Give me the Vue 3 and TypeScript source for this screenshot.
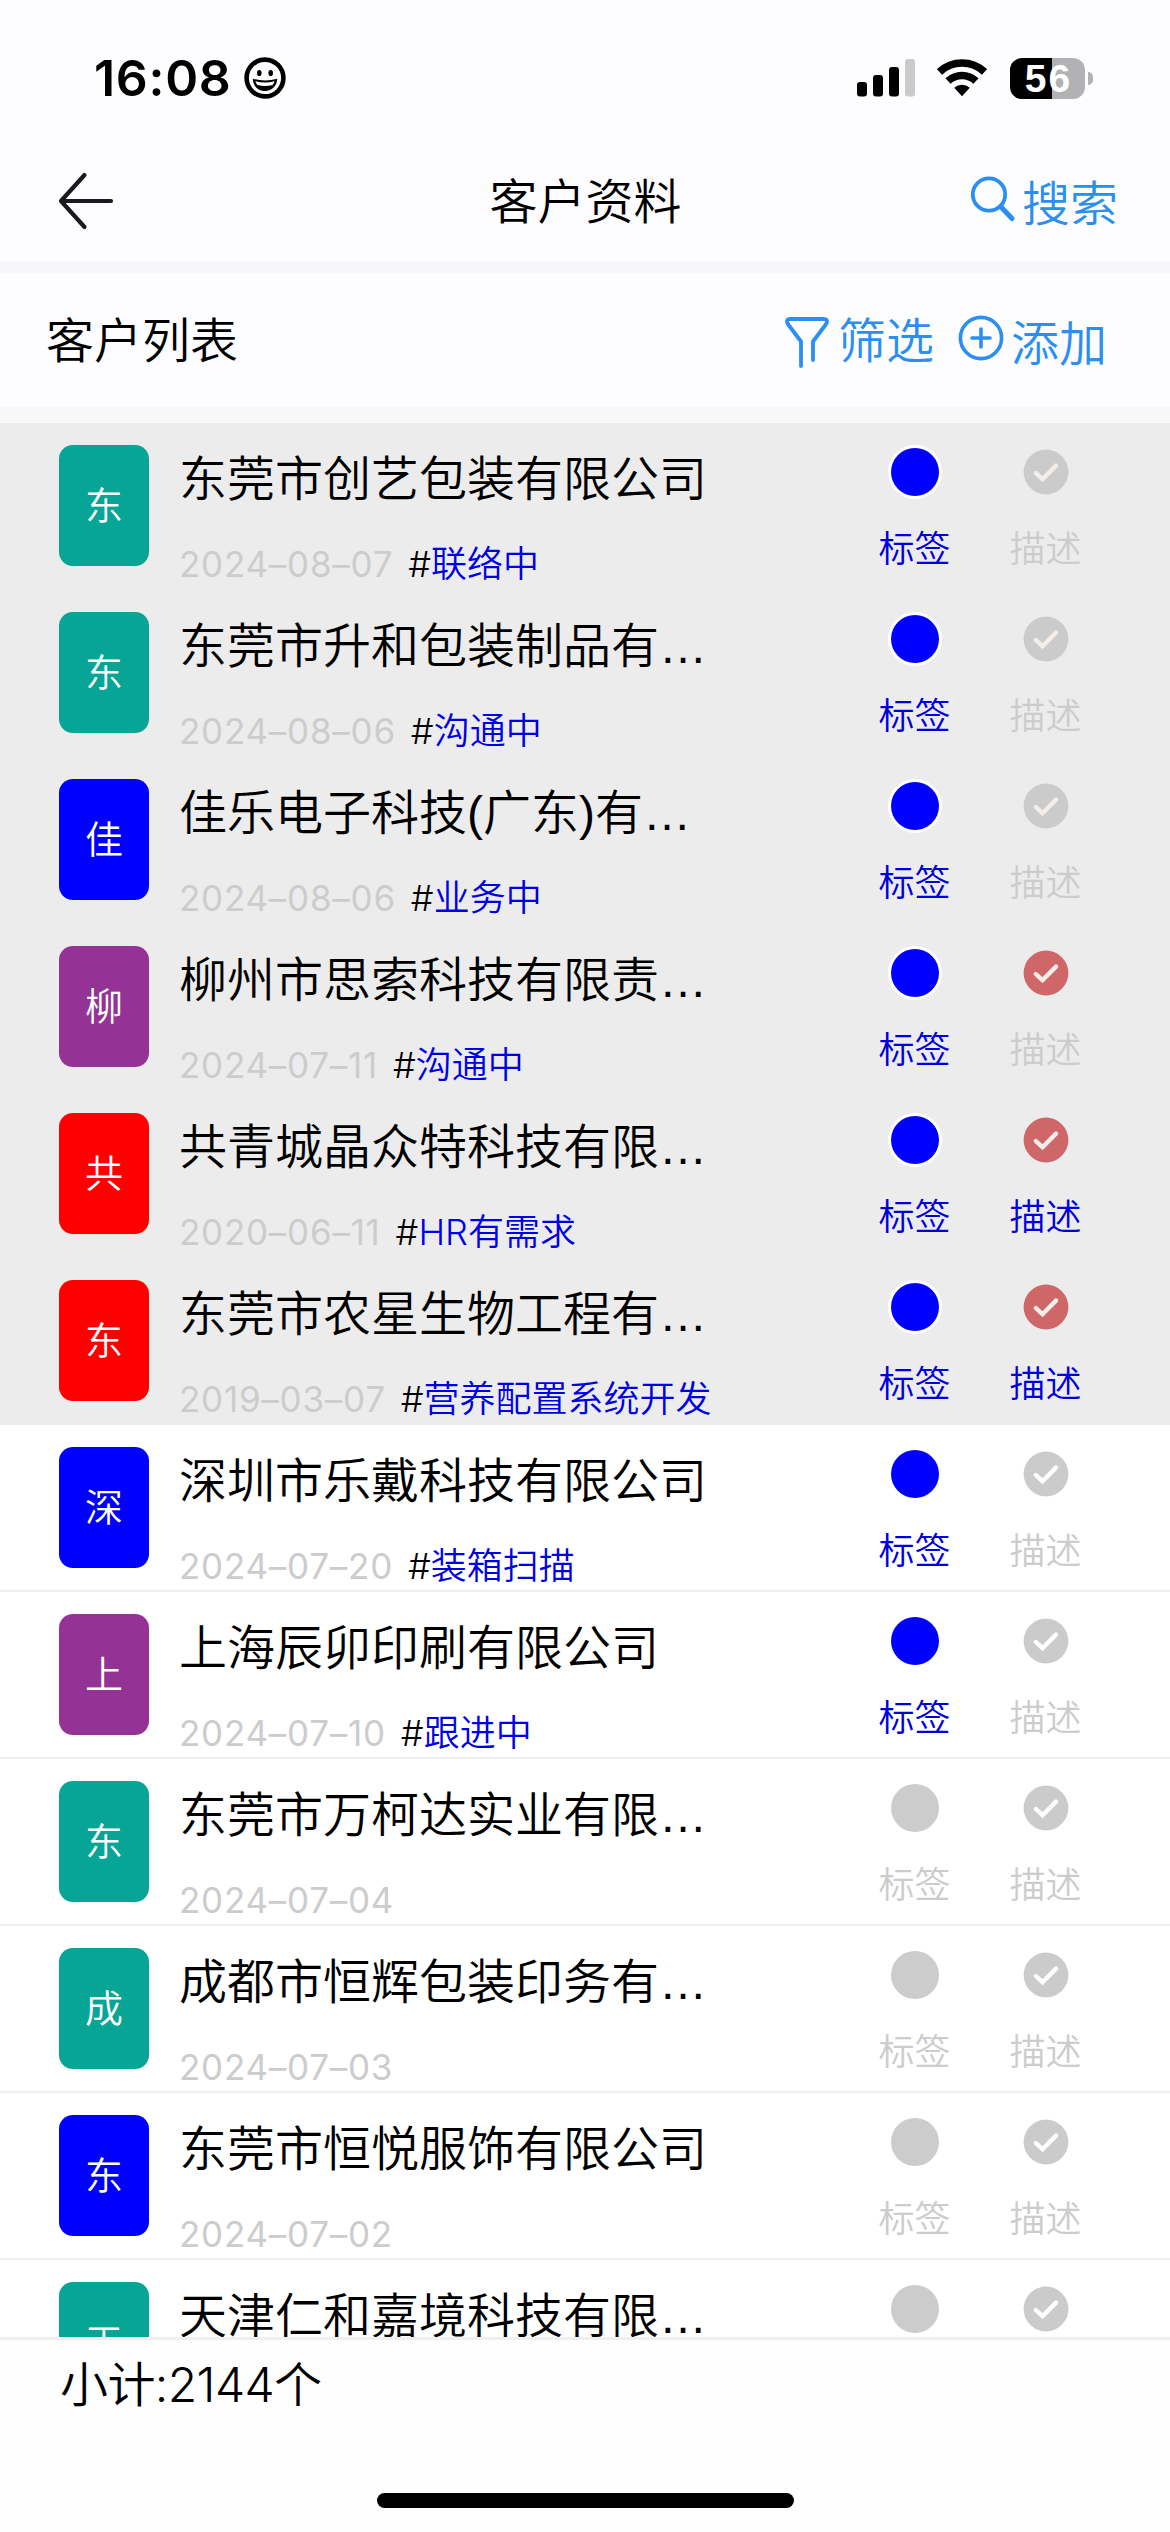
<script setup lang="ts">
interface Customer {
  initial: string
  color: string
  name: string
  date?: string
  status?: string
  pinned?: boolean
  tagged?: boolean
  checked?: boolean
  described?: boolean
}

const TEAL = '#06a595'
const BLUE = '#0000ff'
const PURPLE = '#953296'
const RED = '#ff0000'

const customers: Customer[] = [
  { initial: '东', color: TEAL, name: '东莞市创艺包装有限公司', date: '2024–08–07', status: '联络中', pinned: true, tagged: true },
  { initial: '东', color: TEAL, name: '东莞市升和包装制品有…', date: '2024–08–06', status: '沟通中', pinned: true, tagged: true },
  { initial: '佳', color: BLUE, name: '佳乐电子科技(广东)有…', date: '2024–08–06', status: '业务中', pinned: true, tagged: true },
  { initial: '柳', color: PURPLE, name: '柳州市思索科技有限责…', date: '2024–07–11', status: '沟通中', pinned: true, tagged: true, checked: true },
  { initial: '共', color: RED, name: '共青城晶众特科技有限…', date: '2020–06–11', status: 'HR有需求', pinned: true, tagged: true, checked: true, described: true },
  { initial: '东', color: RED, name: '东莞市农星生物工程有…', date: '2019–03–07', status: '营养配置系统开发', pinned: true, tagged: true, checked: true, described: true },
  { initial: '深', color: BLUE, name: '深圳市乐戴科技有限公司', date: '2024–07–20', status: '装箱扫描', tagged: true },
  { initial: '上', color: PURPLE, name: '上海辰卯印刷有限公司', date: '2024–07–10', status: '跟进中', tagged: true },
  { initial: '东', color: TEAL, name: '东莞市万柯达实业有限…', date: '2024–07–04' },
  { initial: '成', color: TEAL, name: '成都市恒辉包装印务有…', date: '2024–07–03' },
  { initial: '东', color: BLUE, name: '东莞市恒悦服饰有限公司', date: '2024–07–02' },
  { initial: '天', color: TEAL, name: '天津仁和嘉境科技有限…' },
]
const total = 2144
</script>

<template>
  <div class="screen">
    <div class="status-bar">
      <span class="time">16:08</span>
      <svg class="smiley" width="42" height="42" viewBox="0 0 42 42">
        <circle cx="21" cy="21" r="18.4" fill="none" stroke="#000" stroke-width="4.6" />
        <ellipse cx="15.3" cy="16" rx="2.3" ry="3.1" />
        <ellipse cx="26.7" cy="16" rx="2.3" ry="3.1" />
        <path d="M8.8 21.8 Q21 25.2 33.2 21.8 C33 29 28 34 21 34 C14 34 9 29 8.8 21.8Z" />
        <path d="M11.4 24.2 Q21 26.6 30.6 24.2 Q30 26.8 28.6 28 Q21 30 13.4 28 Q12 26.8 11.4 24.2Z" fill="#fff" />
      </svg>
      <div class="status-icons">
        <svg width="58" height="38" viewBox="0 0 58 38">
          <rect x="0" y="23" width="10" height="14.5" rx="3" />
          <rect x="16" y="16" width="10" height="21.5" rx="3" />
          <rect x="32" y="8" width="10" height="29.5" rx="3" />
          <rect x="48" y="0" width="10" height="37.5" rx="3" fill="#cacaca" />
        </svg>
        <svg class="wifi" width="50" height="38" viewBox="0 0 50 38">
          <g fill="none" stroke="#000" stroke-width="7.5">
            <path d="M2.5 12.9 A33 33 0 0 1 47.5 12.9" />
            <path d="M11 22 A20.5 20.5 0 0 1 39 22" />
          </g>
          <path d="M17.2 28.8 A11.5 11.5 0 0 1 32.8 28.8 L25 37.3Z" />
        </svg>
        <div class="battery">
          <div class="cell">56</div>
          <div class="nub"></div>
        </div>
      </div>
    </div>

    <header class="nav">
      <svg class="back" width="56" height="58" viewBox="0 0 56 58">
        <path d="M26.5 3 L3 29 L26.5 55 M3 29 H53" fill="none" stroke="#1a1a1c" stroke-width="4.2" stroke-linecap="round" stroke-linejoin="round" />
      </svg>
      <h1>客户资料</h1>
      <a class="link search">
        <svg width="46" height="46" viewBox="0 0 46 46">
          <g fill="none" stroke="#2a8ff0" stroke-linecap="round">
            <circle cx="19" cy="18.5" r="16.2" stroke-width="3.8" />
            <path d="M31 31 L42 42.5" stroke-width="5" />
          </g>
        </svg>
        <span>搜索</span>
      </a>
    </header>

    <div class="toolbar">
      <h2>客户列表</h2>
      <a class="link filter">
        <svg width="44" height="52" viewBox="0 0 44 52">
          <path d="M16 49 V24.5 L3.2 7.5 Q0 2 5.5 2 H38.5 Q44 2 40.8 7.5 L28 24.5 V43" fill="none" stroke="#2a8ff0" stroke-width="3.8" stroke-linecap="round" stroke-linejoin="round" />
        </svg>
        <span>筛选</span>
      </a>
      <a class="link add">
        <svg width="46" height="46" viewBox="0 0 46 46">
          <g fill="none" stroke="#2a8ff0" stroke-width="3.6" stroke-linecap="round">
            <circle cx="23" cy="23" r="20.6" />
            <path d="M23 14 V32 M14 23 H32" />
          </g>
        </svg>
        <span>添加</span>
      </a>
    </div>

    <main class="list">
      <div v-for="(c, i) in customers" :key="i" class="row" :class="{ pinned: c.pinned }">
        <div class="avatar" :style="{ background: c.color }">{{ c.initial }}</div>
        <div class="info">
          <div class="name">{{ c.name }}</div>
          <div v-if="c.date" class="meta">
            <span class="date">{{ c.date }}</span>
            <span v-if="c.status" class="status">#<em>{{ c.status }}</em></span>
          </div>
        </div>
        <div class="action" :class="{ active: c.tagged }">
          <svg width="54" height="54" viewBox="0 0 54 54">
            <circle v-if="c.tagged" cx="27" cy="27" r="27" fill="#fff" />
            <circle cx="27" cy="27" r="24" :fill="c.tagged ? '#0000ff' : '#cccccc'" />
          </svg>
          <span>标签</span>
        </div>
        <div class="action" :class="{ active: c.described }">
          <svg width="54" height="54" viewBox="0 0 54 54">
            <circle cx="27" cy="27" r="22.4" :fill="c.checked ? '#cf6768' : '#cbcbcb'" />
            <path d="M16.8 28 L23.5 34.2 L37 20.6" fill="none" :stroke="c.pinned ? '#f3eeea' : '#fff'" stroke-width="4.4" stroke-linecap="round" />
          </svg>
          <span>描述</span>
        </div>
      </div>
    </main>

    <footer class="summary">
      <div class="total">小计:{{ total }}个</div>
      <div class="home-indicator"></div>
    </footer>
  </div>
</template>

<style>
body {
  margin: 0;
  background: #fefefe;
}
</style>

<style scoped>
.screen {
  width: 1170px;
  height: 2532px;
  display: flex;
  flex-direction: column;
  overflow: hidden;
  background: #fefefe;
  color: #000;
  font-family: Inter, 'Noto Sans CJK SC', sans-serif;
  font-weight: 350;
}
.screen * {
  box-sizing: border-box;
}
svg {
  display: block;
  flex: none;
}
.status-bar {
  flex: none;
  height: 140px;
  padding: 16px 77px 0 94px;
  display: flex;
  align-items: center;
  background: #fdfcff;
}
.status-bar .time {
  width: 149px;
  font-size: 50px;
  font-weight: 600;
  line-height: 60px;
  letter-spacing: 0.7px;
  white-space: nowrap;
}
.smiley {
  margin-left: 1px;
}
.status-icons {
  margin-left: auto;
  display: flex;
  align-items: center;
}
.wifi {
  margin-left: 22px;
}
.battery {
  margin-left: 23px;
  display: flex;
  align-items: center;
  gap: 3px;
}
.cell {
  width: 75px;
  height: 41px;
  border-radius: 12px;
  background: linear-gradient(90deg, #000 42px, #b2b1b4 42px);
  color: #fff;
  font-family: 'Liberation Sans', sans-serif;
  font-size: 39px;
  font-weight: 700;
  line-height: 41px;
  letter-spacing: 2px;
  text-indent: 2px;
  text-align: center;
}
.nub {
  width: 5px;
  height: 13px;
  border-radius: 0 5px 5px 0;
  background: #b2b1b4;
}
.nav {
  flex: none;
  height: 133px;
  padding: 0 52px 11px 58px;
  border-bottom: 11px solid #f7f6f9;
  display: grid;
  grid-template-columns: 1fr auto 1fr;
  align-items: center;
  background: #fdfcff;
}
h1,
h2 {
  margin: 0;
  font-size: 48px;
  font-weight: 350;
  line-height: 60px;
}
.back {
  margin-top: 11px;
}
.nav h1 {
  padding: 13px 5px 0 0;
}
.link {
  display: flex;
  color: #2a8ff0;
  font-size: 48px;
  line-height: 60px;
}
.search {
  justify-self: end;
  padding-top: 11px;
}
.search svg {
  margin-top: 8px;
}
.search span {
  padding-top: 6px;
  margin-left: 6px;
}
.toolbar {
  flex: none;
  height: 150px;
  padding: 37px 63px 0 46px;
  border-bottom: 16px solid #f8f8f9;
  display: flex;
  align-items: flex-start;
  background: #fdfcff;
}
.toolbar h2 {
  padding-top: 1px;
}
.filter {
  margin-left: auto;
}
.filter svg {
  margin-top: 7px;
}
.filter span {
  margin-left: 9px;
  padding-top: 1px;
}
.add {
  margin-left: 24px;
}
.add svg {
  margin-top: 5px;
}
.add span {
  margin-left: 7px;
  padding-top: 4px;
}
.list {
  flex: none;
  height: 1914px;
  overflow: hidden;
  background: #fff;
}
.row {
  height: 167px;
  padding: 22px 59px 0 59px;
  border-bottom: 2px solid #eeeeee;
  display: flex;
  align-items: flex-start;
}
.row.pinned {
  background: #ececec;
  border-color: #ececec;
}
.avatar {
  flex: none;
  width: 90px;
  height: 121px;
  border-radius: 14px;
  color: #fff;
  font-size: 38px;
  line-height: 120px;
  text-align: center;
}
.info {
  flex: none;
  width: 670px;
  margin-left: 30px;
  padding-top: 3px;
}
.name {
  font-family: 'Liberation Sans', 'Noto Sans CJK SC', sans-serif;
  font-size: 48px;
  line-height: 64px;
  white-space: nowrap;
}
.meta {
  margin-top: 32px;
  display: flex;
  align-items: baseline;
  font-size: 36px;
  line-height: 40px;
  white-space: nowrap;
}
.date {
  color: #cccccc;
  font-size: 35px;
  font-weight: 400;
  letter-spacing: 0.75px;
}
.status {
  margin-left: 15px;
}
.status em {
  font-style: normal;
  color: #0000e6;
}
.action {
  flex: none;
  width: 131px;
  display: flex;
  flex-direction: column;
  align-items: center;
  color: #cccccc;
  font-size: 36px;
  line-height: 40px;
}
.action span {
  margin-top: 30px;
}
.action.active {
  color: #0000dd;
}
.summary {
  flex: 1;
  border-top: 3px solid #efefef;
  display: flex;
  flex-direction: column;
  align-items: center;
  background: #fefefe;
}
.total {
  align-self: flex-start;
  padding: 15px 0 0 60px;
  font-size: 48px;
  line-height: 60px;
  letter-spacing: -0.6px;
}
.home-indicator {
  width: 417px;
  height: 15px;
  margin: auto 0 24px;
  border-radius: 8px;
  background: #000;
}
</style>
